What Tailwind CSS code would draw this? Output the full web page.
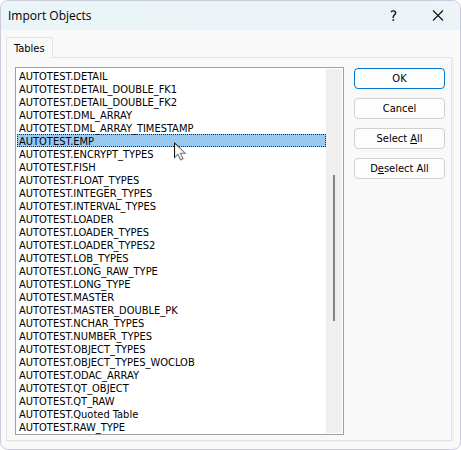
<!DOCTYPE html>
<html lang="en">
<head>
    <meta charset="UTF-8">
    <meta name="viewport" content="width=device-width, initial-scale=1.0">
    <title>Import Objects</title>
    <script src="https://cdn.jsdelivr.net/npm/@tailwindcss/browser@4"></script>
</head>
<body class="bg-white text-black text-[11px] leading-[15px] font-['DejaVu_Sans_Condensed','Noto_Sans',sans-serif]">

    <div role="dialog" aria-labelledby="dialog-title" class="min-h-screen flex flex-col bg-[#f9f9f9] border border-[#cbcbdc] rounded-lg overflow-hidden">

        <header class="h-[29px] flex items-center justify-between pl-[7px] pr-3 bg-linear-to-r from-[#e9f5f7] to-[#ecf3f9]">
            <h1 id="dialog-title" class="text-xs font-['Open_Sans',sans-serif]">Import Objects</h1>
            <div class="flex items-center gap-6">
                <button type="button" aria-label="Help" class="w-5 h-5 flex items-center justify-center">
                    <svg class="w-3 h-3" viewBox="0 0 12 12" fill="none" stroke="#111" stroke-width="1.4"><path d="M3 2C3.8 1.2 4.6 .9 5.4 .9C6.8 .9 7.6 1.7 7.6 2.9C7.6 4.6 5.2 5 5.2 7.2V8" /><path d="M4.4 10h1.7" stroke-width="1.7" /></svg>
                </button>
                <button type="button" aria-label="Close" class="w-5 h-5 flex items-center justify-center">
                    <svg class="w-3 h-3" viewBox="0 0 12 12" fill="none" stroke="#111" stroke-width="1.1"><path d="M1 .5l10 10M11 .5L1 10.5" /></svg>
                </button>
            </div>
        </header>

        <main class="flex-1 flex flex-col pt-[7px] pl-[5px] pr-2 pb-2">
            <div role="tablist" class="flex">
                <button type="button" role="tab" id="tab-tables" aria-selected="true" aria-controls="panel-tables" class="relative z-10 -mb-px h-[21px] px-[7px] flex items-center bg-[#f9f9f9] border border-b-0 border-[#e3e3e3]">Tables</button>
            </div>

            <div role="tabpanel" id="panel-tables" aria-labelledby="tab-tables" class="flex-1 flex items-start gap-[10px] pt-[9px] pl-2 pr-[6px] pb-[5px] border border-[#e3e3e3] shadow-[2px_1px_0_#f2f2f2]">

                <div class="relative flex-1 flex p-px bg-white border border-[#a0a0a0]">
                    <ul role="listbox" aria-label="Tables" class="flex-1 whitespace-nowrap *:h-[13px] *:px-[2px]">
                        <li role="option">AUTOTEST.DETAIL</li>
                        <li role="option">AUTOTEST.DETAIL_DOUBLE_FK1</li>
                        <li role="option">AUTOTEST.DETAIL_DOUBLE_FK2</li>
                        <li role="option">AUTOTEST.DML_ARRAY</li>
                        <li role="option">AUTOTEST.DML_ARRAY_TIMESTAMP</li>
                        <li role="option" aria-selected="true" class="bg-[#99c9ef] outline-1 -outline-offset-1 outline-dotted outline-[#1c2a38]">AUTOTEST.EMP</li>
                        <li role="option">AUTOTEST.ENCRYPT_TYPES</li>
                        <li role="option">AUTOTEST.FISH</li>
                        <li role="option">AUTOTEST.FLOAT_TYPES</li>
                        <li role="option">AUTOTEST.INTEGER_TYPES</li>
                        <li role="option">AUTOTEST.INTERVAL_TYPES</li>
                        <li role="option">AUTOTEST.LOADER</li>
                        <li role="option">AUTOTEST.LOADER_TYPES</li>
                        <li role="option">AUTOTEST.LOADER_TYPES2</li>
                        <li role="option">AUTOTEST.LOB_TYPES</li>
                        <li role="option">AUTOTEST.LONG_RAW_TYPE</li>
                        <li role="option">AUTOTEST.LONG_TYPE</li>
                        <li role="option">AUTOTEST.MASTER</li>
                        <li role="option">AUTOTEST.MASTER_DOUBLE_PK</li>
                        <li role="option">AUTOTEST.NCHAR_TYPES</li>
                        <li role="option">AUTOTEST.NUMBER_TYPES</li>
                        <li role="option">AUTOTEST.OBJECT_TYPES</li>
                        <li role="option">AUTOTEST.OBJECT_TYPES_WOCLOB</li>
                        <li role="option">AUTOTEST.ODAC_ARRAY</li>
                        <li role="option">AUTOTEST.QT_OBJECT</li>
                        <li role="option">AUTOTEST.QT_RAW</li>
                        <li role="option">AUTOTEST.Quoted Table</li>
                        <li role="option">AUTOTEST.RAW_TYPE</li>
                    </ul>

                    <!-- thin scrollbar -->
                    <div class="w-4 flex justify-center pt-[106px] bg-[#efefef]">
                        <div class="w-[2px] h-[146px] bg-[#858585]"></div>
                    </div>

                    <!-- mouse pointer -->
                    <svg class="absolute left-[158px] top-[74px] w-3 h-[19px]" viewBox="0 0 12 19">
                        <path d="M.5 .8V15.6L4 12.3L6.5 17.8L9 16.7L6.6 11.4H11.3Z" fill="#fff" stroke="#888" stroke-width="1.3" />
                        <path d="M.5 .8V15.6" stroke="#111" />
                        <path d="M.5 .8L5 5.4" stroke="#333" />
                    </svg>
                </div>

                <div class="w-[91px] pt-px flex flex-col gap-[9px] *:h-[21px] *:rounded-[4px] *:border *:bg-[#fdfdfd] *:text-center">
                    <button type="submit" class="border-[#0078d4]">OK</button>
                    <button type="button" class="border-[#d0d0d0]">Cancel</button>
                    <button type="button" class="border-[#d0d0d0]">Select <u>A</u>ll</button>
                    <button type="button" class="border-[#d0d0d0]">D<u>e</u>select All</button>
                </div>
            </div>
        </main>
    </div>

</body>
</html>
